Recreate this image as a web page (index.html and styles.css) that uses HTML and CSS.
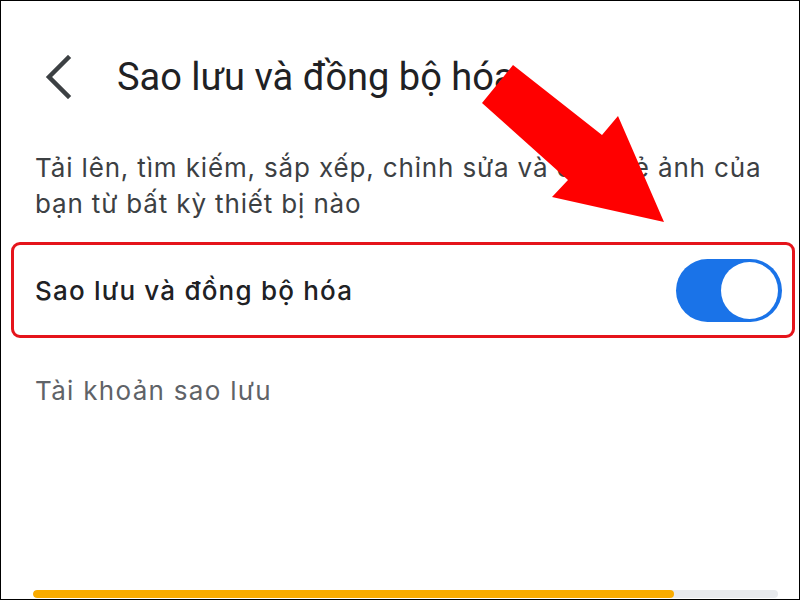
FILE: index.html
```html
<!DOCTYPE html>
<html lang="vi">
<head>
<meta charset="utf-8">
<title>Sao lưu và đồng bộ hóa</title>
<link rel="stylesheet" href="styles.css">
</head>
<body>
<div class="frame">
  <header class="header">
    <svg class="back" width="30" height="44" viewBox="0 0 30 44">
      <polyline points="24,3 5,22 24,41" fill="none" stroke="#3c4043" stroke-width="4.5" stroke-linecap="square" stroke-linejoin="miter"/>
    </svg>
    <h1 class="title">Sao lưu và đồng bộ hóa</h1>
  </header>
  <p class="desc">Tải lên, tìm kiếm, sắp xếp, chỉnh sửa và chia sẻ ảnh của bạn từ bất kỳ thiết bị nào</p>
  <div class="row">
    <span class="row-label">Sao lưu và đồng bộ hóa</span>
    <span class="toggle"><span class="knob"></span></span>
  </div>
  <div class="item">Tài khoản sao lưu</div>
  <div class="progress"><div class="progress-fill" style="width:86%"></div></div>
  <svg class="arrow" width="800" height="600" viewBox="0 0 800 600">
    <polygon points="513,65 602,135 618,116 664,222 552,197 568,180 482,103" fill="#ff0000"/>
  </svg>
</div>
</body>
</html>
```
FILE: styles.css
```css
* { box-sizing: border-box; }
html, body { margin: 0; padding: 0; background: #fff; }
.frame {
  position: relative;
  width: 800px;
  height: 600px;
  border: 1px solid #000;
  display: flex;
  flex-direction: column;
  font-family: Inter, "Noto Sans", sans-serif;
  overflow: hidden;
}
.header {
  display: flex;
  align-items: center;
  height: 60px;
  margin-top: 46px;
  padding-left: 43px;
}
.back { flex: none; display: block; }
.title {
  margin: 0 0 0 43px;
  font-family: Roboto, "Noto Sans", sans-serif;
  font-size: 38px;
  font-weight: 400;
  color: #202124;
  line-height: normal;
}
.desc {
  margin: 43px 16px 0 34px;
  font-size: 26px;
  line-height: 36px;
  color: #3c4043;
  letter-spacing: 0.85px;
}
.row {
  margin: 20px 4px 0 10px;
  height: 96px;
  border: 3px solid #e5141b;
  border-radius: 9px;
  display: flex;
  align-items: center;
  justify-content: space-between;
  padding: 0 10px 0 21px;
}
.row-label {
  font-size: 26px;
  font-weight: 500;
  color: #202124;
  letter-spacing: 1.2px;
}
.toggle {
  width: 106px;
  height: 63px;
  border-radius: 32px;
  background: #1a73e8;
  display: flex;
  justify-content: flex-end;
  align-items: center;
  padding: 0 4px;
}
.knob {
  width: 57px;
  height: 57px;
  border-radius: 50%;
  background: #fff;
}
.item {
  margin: 35px 0 0 34px;
  font-size: 26px;
  line-height: 36px;
  color: #5f6368;
  letter-spacing: 1.3px;
}
.progress {
  margin: auto 21px 1px 32px;
  height: 8px;
  border-radius: 4px;
  background: #e8eaed;
  overflow: hidden;
}
.progress-fill {
  height: 100%;
  border-radius: 4px;
  background: #f9ab00;
}
.arrow {
  position: absolute;
  left: -1px;
  top: -1px;
  pointer-events: none;
}
```
